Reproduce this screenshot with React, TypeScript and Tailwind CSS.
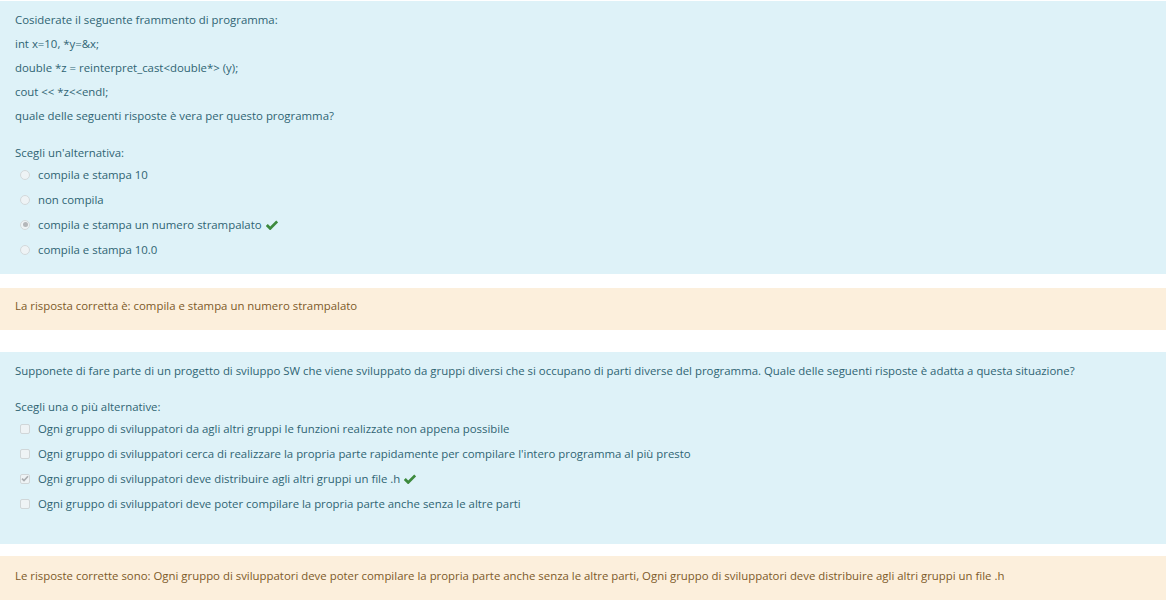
import React from "react";

type Option = {
  label: string;
  selected?: boolean;
  correct?: boolean;
};

const q1Options: Option[] = [
  { label: "compila e stampa 10" },
  { label: "non compila" },
  { label: "compila e stampa un numero strampalato", selected: true, correct: true },
  { label: "compila e stampa 10.0" },
];

const q2Options: Option[] = [
  { label: "Ogni gruppo di sviluppatori da agli altri gruppi le funzioni realizzate non appena possibile" },
  {
    label:
      "Ogni gruppo di sviluppatori cerca di realizzare la propria parte rapidamente per compilare l'intero programma al più presto",
  },
  {
    label: "Ogni gruppo di sviluppatori deve distribuire agli altri gruppi un file .h",
    selected: true,
    correct: true,
  },
  { label: "Ogni gruppo di sviluppatori deve poter compilare la propria parte anche senza le altre parti" },
];

// segno di spunta verde (risposta corretta)
const CheckMark = () => (
  <svg width="12" height="10" viewBox="0 0 12 10" className="ml-[4px]">
    <path d="M0.8 5 L4.2 8.4 L11.2 1.4" fill="none" stroke="#3d8a3d" strokeWidth="2.8" />
  </svg>
);

const Radio = ({ checked }: { checked?: boolean }) => (
  <span className="w-[10px] h-[10px] rounded-full border border-[#d3d9db] bg-[#eef3f5] flex items-center justify-center">
    {checked && <span className="w-[5px] h-[5px] rounded-full bg-[#b4b7ba]" />}
  </span>
);

const Checkbox = ({ checked }: { checked?: boolean }) => (
  <span className="w-[10px] h-[10px] rounded-[2px] border border-[#d0d6d8] bg-[#eef3f5] flex items-center justify-center">
    {checked && (
      <svg width="8" height="7" viewBox="0 0 8 7">
        <path d="M1 3.6 L3 5.6 L7 1.2" fill="none" stroke="#a9adb0" strokeWidth="1.6" />
      </svg>
    )}
  </span>
);

const OptionRow = ({ option, multi }: { option: Option; multi?: boolean }) => (
  <div className="h-[25px] flex items-center pl-[5px]">
    {multi ? <Checkbox checked={option.selected} /> : <Radio checked={option.selected} />}
    <span className="ml-[8px]">{option.label}</span>
    {option.correct && <CheckMark />}
  </div>
);

export default function App() {
  return (
    <div
      className="w-[1169px] h-[604px] bg-white text-[11.4px] overflow-hidden pt-[1px]"
      style={{ fontFamily: '"Open Sans", "Noto Sans", sans-serif' }}
    >
      {/* Domanda 1 */}
      <div className="w-[1166px] bg-[#def2f8] text-[#2f6473] px-[15px] pt-[7px] pb-[12px]">
        <div className="leading-[24px]">
          <p>Cosiderate il seguente frammento di programma:</p>
          <p>int x=10, *y=&amp;x;</p>
          <p>double *z = reinterpret_cast&lt;double*&gt; (y);</p>
          <p>cout &lt;&lt; *z&lt;&lt;endl;</p>
          <p>quale delle seguenti risposte è vera per questo programma?</p>
        </div>
        <p className="mt-[16px] leading-[18px]">Scegli un'alternativa:</p>
        <div>
          {q1Options.map((o) => (
            <OptionRow key={o.label} option={o} />
          ))}
        </div>
      </div>

      {/* Risposta 1 */}
      <div className="w-[1166px] mt-[14px] bg-[#fcefdc] text-[#7d5a29] px-[15px] pt-[8px] pb-[14px] leading-[20px]">
        La risposta corretta è: compila e stampa un numero strampalato
      </div>

      {/* Domanda 2 */}
      <div className="w-[1166px] mt-[22px] bg-[#def2f8] text-[#2f6473] px-[15px] pt-[9px] pb-[28px]">
        <p className="leading-[20px]">
          Supponete di fare parte di un progetto di sviluppo SW che viene sviluppato da gruppi diversi che si
          occupano di parti diverse del programma. Quale delle seguenti risposte è adatta a questa situazione?
        </p>
        <p className="mt-[17px] leading-[18px]">Scegli una o più alternative:</p>
        <div>
          {q2Options.map((o) => (
            <OptionRow key={o.label} option={o} multi />
          ))}
        </div>
      </div>

      {/* Risposta 2 */}
      <div className="w-[1166px] mt-[12px] bg-[#fcefdc] text-[#7d5a29] px-[15px] pt-[10px] pb-[14px] leading-[20px]">
        Le risposte corrette sono: Ogni gruppo di sviluppatori deve poter compilare la propria parte anche senza le
        altre parti, Ogni gruppo di sviluppatori deve distribuire agli altri gruppi un file .h
      </div>
    </div>
  );
}
